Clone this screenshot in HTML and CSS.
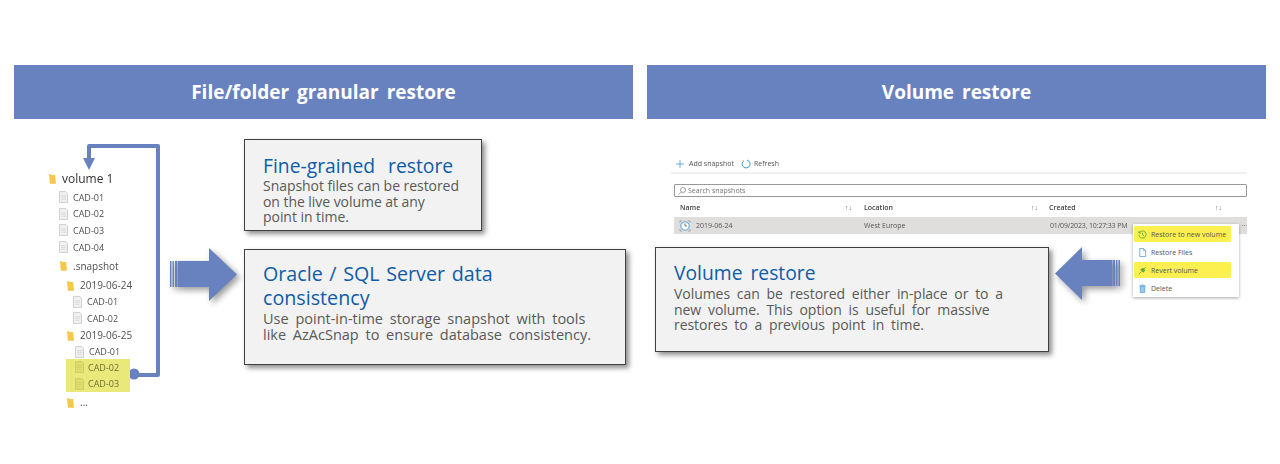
FILE: index.html
```html
<!DOCTYPE html>
<html lang="en">
<head>
<meta charset="utf-8">
<title>Restore options</title>
<link rel="stylesheet" href="styles.css">
</head>
<body>
<main class="slide">
  <section class="col">
    <h2 class="banner">File/folder granular restore</h2>
    <div class="left-body">
      <svg class="loop" width="619" height="300" viewBox="0 0 619 300" aria-hidden="true">
        <path d="M120 256H144V27H75V42" fill="none" stroke="#6882bf" stroke-width="4" stroke-linejoin="round"/>
        <path d="M69 39H81L75 51Z" fill="#6882bf"/>
        <circle cx="120" cy="255" r="5.5" fill="#6882bf"/>
      </svg>
      <div class="tree">
        <div class="row root"><svg class="folder" viewBox="0 0 8 12"><path d="M0 1h2l1 1h4l1 10H1Z"/></svg><span>volume 1</span></div>
        <div class="row l1 tight"><svg class="file" viewBox="0 0 10 13"><path d="M.5.5h7l2 2v10H.5Z"/><path class="ln" d="M2 5h6M2 7h6M2 9h6"/></svg><span>CAD-01</span></div>
        <div class="row l1"><svg class="file" viewBox="0 0 10 13"><path d="M.5.5h7l2 2v10H.5Z"/><path class="ln" d="M2 5h6M2 7h6M2 9h6"/></svg><span>CAD-02</span></div>
        <div class="row l1"><svg class="file" viewBox="0 0 10 13"><path d="M.5.5h7l2 2v10H.5Z"/><path class="ln" d="M2 5h6M2 7h6M2 9h6"/></svg><span>CAD-03</span></div>
        <div class="row l1"><svg class="file" viewBox="0 0 10 13"><path d="M.5.5h7l2 2v10H.5Z"/><path class="ln" d="M2 5h6M2 7h6M2 9h6"/></svg><span>CAD-04</span></div>
        <div class="row l1b gap"><svg class="folder" viewBox="0 0 8 12"><path d="M0 1h2l1 1h4l1 10H1Z"/></svg><span>.snapshot</span></div>
        <div class="row l2 gap"><svg class="folder" viewBox="0 0 8 12"><path d="M0 1h2l1 1h4l1 10H1Z"/></svg><span>2019-06-24</span></div>
        <div class="row l3"><svg class="file" viewBox="0 0 10 13"><path d="M.5.5h7l2 2v10H.5Z"/><path class="ln" d="M2 5h6M2 7h6M2 9h6"/></svg><span>CAD-01</span></div>
        <div class="row l3"><svg class="file" viewBox="0 0 10 13"><path d="M.5.5h7l2 2v10H.5Z"/><path class="ln" d="M2 5h6M2 7h6M2 9h6"/></svg><span>CAD-02</span></div>
        <div class="row l2b"><svg class="folder" viewBox="0 0 8 12"><path d="M0 1h2l1 1h4l1 10H1Z"/></svg><span>2019-06-25</span></div>
        <div class="row l4"><svg class="file" viewBox="0 0 10 13"><path d="M.5.5h7l2 2v10H.5Z"/><path class="ln" d="M2 5h6M2 7h6M2 9h6"/></svg><span>CAD-01</span></div>
        <div class="picked">
          <div class="row p"><svg class="file" viewBox="0 0 10 13"><path d="M.5.5h7l2 2v10H.5Z"/><path class="ln" d="M2 5h6M2 7h6M2 9h6"/></svg><span>CAD-02</span></div>
          <div class="row p"><svg class="file" viewBox="0 0 10 13"><path d="M.5.5h7l2 2v10H.5Z"/><path class="ln" d="M2 5h6M2 7h6M2 9h6"/></svg><span>CAD-03</span></div>
        </div>
        <div class="row l2 after"><svg class="folder" viewBox="0 0 8 12"><path d="M0 1h2l1 1h4l1 10H1Z"/></svg><span>...</span></div>
      </div>
      <svg class="arrow arrow-right" width="72" height="58" viewBox="0 0 72 58" aria-hidden="true">
        <path d="M0 14h1.500v26H0ZM2.500 14H4v26H2.500ZM5 14h2.500v26H5ZM8 14h31V1L67 27.500 39 54V40H8Z" fill="#6882bf"/>
      </svg>
      <div class="stack">
        <article class="callout fine">
          <h3>Fine-grained restore</h3>
          <p>Snapshot files can be restored on the live volume at any point in time.</p>
        </article>
        <article class="callout oracle">
          <h3>Oracle / SQL Server data consistency</h3>
          <p>Use point-in-time storage snapshot with tools like AzAcSnap to ensure database consistency.</p>
        </article>
      </div>
    </div>
  </section>
  <section class="col">
    <h2 class="banner">Volume restore</h2>
    <div class="right-body">
      <div class="portal">
        <div class="toolbar">
          <svg class="tool" viewBox="0 0 10 10"><path d="M5 0v10M0 5h10" fill="none" stroke="#4a9ad8"/></svg><span>Add snapshot</span>
          <svg class="tool refresh" viewBox="0 0 10 10"><path d="M6 1A4 4 0 1 1 3 1.500" fill="none" stroke="#3f97d6"/></svg><span>Refresh</span>
        </div>
        <div class="search"><svg class="glass" viewBox="0 0 8 8"><circle cx="5" cy="3" r="2.500" fill="none" stroke="#777" stroke-width=".7"/><path d="M3.200 5 .5 7.700" stroke="#777" stroke-width=".7"/></svg><span>Search snapshots</span></div>
        <div class="thead">
          <span class="c1">Name</span><span class="sort">↑↓</span>
          <span class="c2">Location</span><span class="sort">↑↓</span>
          <span class="c3">Created</span><span class="sort">↑↓</span>
        </div>
        <div class="trow">
          <span class="named"><svg class="clock" viewBox="0 0 12 12"><circle cx="6" cy="6" r="4.200" fill="#fff" stroke="#3f97d6" stroke-width=".9"/><path d="M6 3.500V6h2" fill="none" stroke="#444" stroke-width=".7"/><path d="M1 3V1h2M9 1h2v2M1 9v2h2M11 9v2H9" fill="none" stroke="#777" stroke-width=".5"/></svg>2019-06-24</span>
          <span class="body-c2">West Europe</span>
          <span class="body-c3">01/09/2023, 10:27:33 PM</span>
          <span class="more">···</span>
        </div>
      </div>
      <ul class="menu">
        <li class="hl"><svg class="mi" viewBox="0 0 10 10"><path d="M1.500 3A4 4 0 1 1 1 5.500M1 1v2.300h2.300M5 3v2.500l1.800 1" fill="none" stroke="#3c9a3c" stroke-width=".8"/></svg>Restore to new volume</li>
        <li><svg class="mi" viewBox="0 0 10 10"><path d="M2 .5h4l2.500 2.500v6.500H2Z" fill="#fff" stroke="#3f97d6" stroke-width=".8"/><path d="M6 .5V3h2.500" fill="none" stroke="#3f97d6" stroke-width=".6"/></svg>Restore Files</li>
        <li class="hl"><svg class="mi" viewBox="0 0 10 10"><path d="M1 9 4 6M6 4l3-3M3 4l3 3 1.500-2.500L5.500 2.500Z" fill="#6cb33f" stroke="#3c8a30" stroke-width=".7"/></svg>Revert volume</li>
        <li><svg class="mi" viewBox="0 0 10 10"><path d="M2.500 2.500h5v7h-5Z" fill="#9cc9ea" stroke="#3f97d6" stroke-width=".7"/><path d="M1.500 2h7M4 1h2" stroke="#3f97d6" stroke-width=".8"/></svg>Delete</li>
      </ul>
      <svg class="arrow arrow-left" width="72" height="58" viewBox="0 0 72 58" aria-hidden="true">
        <path d="M66 14h-1.500v26H66ZM63.500 14H62v26h1.500ZM61 14h-2.500v26H61ZM58 14H28V1L1 27.500 28 54V40h30Z" fill="#6882bf"/>
      </svg>
      <article class="callout volume">
        <h3>Volume restore</h3>
        <p>Volumes can be restored either in-place or to a new volume. This option is useful for massive restores to a previous point in time.</p>
      </article>
    </div>
  </section>
</main>
</body>
</html>
```

FILE: styles.css
```css
* { box-sizing: border-box; }
html, body { margin: 0; height: 464px; background: #fff; overflow: hidden; }
body { font-family: "Open Sans", "Noto Sans", "Liberation Sans", sans-serif; color: #595959; }
.slide { display: flex; gap: 14px; padding: 65px 14px 0; }
.col { width: 619px; flex: none; }
.banner {
  margin: 0; height: 54px; display: flex; align-items: center; justify-content: center;
  background: #6882bf; color: #fff; font-size: 19px; font-weight: 700; word-spacing: 3px;
}
.left-body { position: relative; display: flex; padding: 20px 0 0 34px; }
.loop { position: absolute; left: 0; top: 0; }
.tree { width: 122px; flex: none; padding-top: 30px; color: #505050; font-size: 10px; filter: blur(.3px); }
.row { display: flex; align-items: center; height: 16.6px; white-space: nowrap; }
.file + span { font-size: 9px; }
.root { height: 18px; color: #333; font-size: 12px; }
.tight { margin-top: 2px; }
.gap { margin-top: 2px; }
.l2.gap { margin-top: 3px; }
.after { margin-top: 2px; }
.l1 { padding-left: 11px; }
.l1b { padding-left: 12px; }
.l2 { padding-left: 19px; }
.l2b { padding-left: 19px; }
.l3 { padding-left: 25px; }
.l4 { padding-left: 27px; }
.folder { width: 7px; height: 11px; margin-right: 6px; flex: none; }
.folder path { fill: #f5c84a; }
.root .folder { margin-right: 6px; margin-left: 1px; }
.file { width: 9px; height: 12px; margin-right: 5px; flex: none; }
.file path { fill: #f2f2f2; stroke: #bdbdbd; stroke-width: .8; }
.file .ln { fill: none; stroke: #d2d2d2; }
.picked { margin: -1px 0 0 18px; width: 64px; height: 33px; background: #e9e97a; color: #6f6f3a; }
.p { padding-left: 9px; }
.p .file { margin-right: 4px; }
.p .file path { fill: #dede70; stroke: #c6c660; }
.p .file .ln { stroke: #cfcf66; }

.arrow { flex: none; filter: drop-shadow(3px 3px 3px rgba(0,0,0,.4)); }
.arrow-right { margin-top: 108px; margin-right: 2px; }

.stack { display: flex; flex-direction: column; gap: 18px; }
.callout {
  background: #f2f2f2; border: 1px solid #404040; box-shadow: 3px 3px 5px rgba(0,0,0,.45);
  padding: 14px 18px 0; color: #595959;
}
.callout h3 { margin: 0; font-size: 19.300px; line-height: 24px; font-weight: 400; color: #0f5ca8; word-spacing: 8px; }
.callout p { margin: 0; font-size: 14px; line-height: 15.6px; letter-spacing: -.05px; }
.fine { width: 238px; height: 92px; padding-right: 20px; }
.oracle { width: 382px; height: 116px; padding-top: 12px; }
.oracle h3 { max-width: 270px; font-size: 19.700px; word-spacing: 1.500px; }
.oracle p { margin-top: 1px; max-width: 330px; font-size: 14.500px; letter-spacing: 0; word-spacing: 3px; }
.volume { padding-top: 13px; }
.volume h3 { word-spacing: 3px; }
.volume p { margin-top: 1px; max-width: 340px; word-spacing: 3.200px; }

.right-body { position: relative; height: 300px; padding: 36px 0 0 24px; }
.portal { width: 576px; font-size: 7px; color: #555; filter: blur(.2px); }
.toolbar { display: flex; align-items: center; height: 19px; padding: 0 0 0 5px; border-bottom: 2px solid #f0f0f0; }
.tool { width: 8px; height: 8px; margin-right: 5px; flex: none; }
.refresh { width: 10px; height: 10px; margin-left: 7px; margin-right: 3px; }
.search {
  display: flex; align-items: center; gap: 2px; margin: 10px 0 0 3px; height: 13px; padding-left: 3px;
  border: 1px solid #999; border-radius: 1px; color: #777;
}
.glass { width: 8px; height: 8px; }
.thead, .trow { display: grid; grid-template-columns: 171px 19px 167px 18px 166px 32px; align-items: center; margin-left: 3px; }
.thead { height: 20px; font-weight: 600; color: #444; }
.trow { height: 17px; background: #e0dedc; }
.c1 { padding-left: 6px; }
.sort { font-size: 7px; color: #777; font-weight: 400; }
.named { grid-column: 1 / 3; display: flex; align-items: center; gap: 5px; padding-left: 5px; }
.body-c2 { grid-column: 3 / 5; }
.body-c3 { grid-column: 5; padding-left: 1px; letter-spacing: -.15px; }
.more { grid-column: 6; text-align: right; }
.clock { width: 12px; height: 12px; }

.menu {
  position: absolute; left: 486px; top: 105px; width: 106px; height: 73px; margin: 0; padding: 2px 8px 0 1px;
  list-style: none; background: #fff; box-shadow: 0 1px 3px rgba(0,0,0,.35); font-size: 7px; color: #555;
}
.menu li { display: flex; align-items: center; gap: 4px; height: 16px; padding-left: 4px; margin-bottom: 2px; white-space: nowrap; }
.menu .hl { background: #fcf050; }
.mi { width: 9px; height: 9px; flex: none; }
.arrow-left { position: absolute; left: 407px; top: 127px; }
.volume { position: absolute; left: 8px; top: 128px; width: 394px; height: 105px; }
```
